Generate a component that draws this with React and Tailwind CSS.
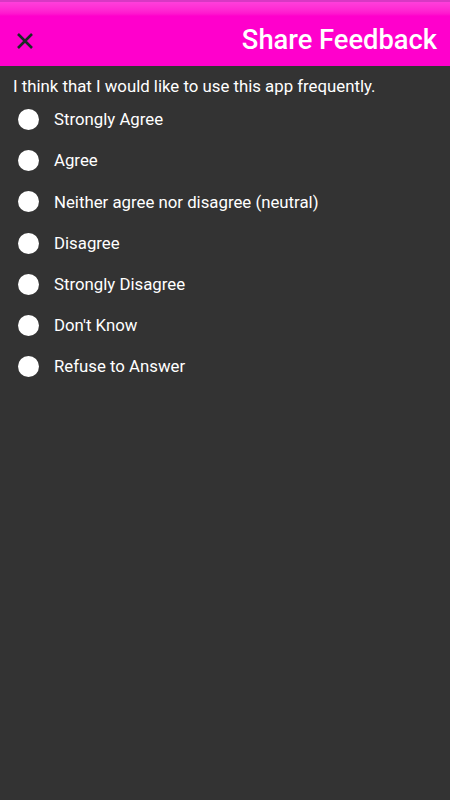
export default function App() {
  const options = [
    "Strongly Agree",
    "Agree",
    "Neither agree nor disagree (neutral)",
    "Disagree",
    "Strongly Disagree",
    "Don't Know",
    "Refuse to Answer",
  ];
  return (
    <div className="w-[450px] h-[800px] bg-[#333333] flex flex-col" style={{ fontFamily: "Roboto, sans-serif" }}>
      <div className="relative h-[66px] bg-[#ff00cc] flex items-center justify-between pl-[16px] pr-[13px] pt-[15px] shrink-0">
        <div className="absolute inset-x-0 top-0 h-[16px] bg-gradient-to-b from-[#ff44dd] to-[#ff00cc]" />
        <div className="absolute inset-x-0 top-0 h-[2px] bg-[#d838c4]" />
        <svg width="18" height="18" viewBox="0 0 18 18" className="relative">
          <path d="M2 2 L16 16 M16 2 L2 16" stroke="#1b2a24" strokeWidth="2.6" strokeLinecap="butt" />
        </svg>
        <div className="relative text-white text-[27.3px] font-medium leading-none">Share Feedback</div>
      </div>
      <div className="px-[13px] pt-[10px] text-white text-[16.8px] leading-[20px]">
        I think that I would like to use this app frequently.
      </div>
      <div className="flex flex-col pl-[18px] pt-[3px]">
        {options.map((o) => (
          <div key={o} className="flex items-center h-[41.2px] gap-[15px]">
            <div className="w-[21px] h-[21px] rounded-full bg-white shrink-0" />
            <div className="text-white text-[16.8px] leading-none">{o}</div>
          </div>
        ))}
      </div>
    </div>
  );
}
